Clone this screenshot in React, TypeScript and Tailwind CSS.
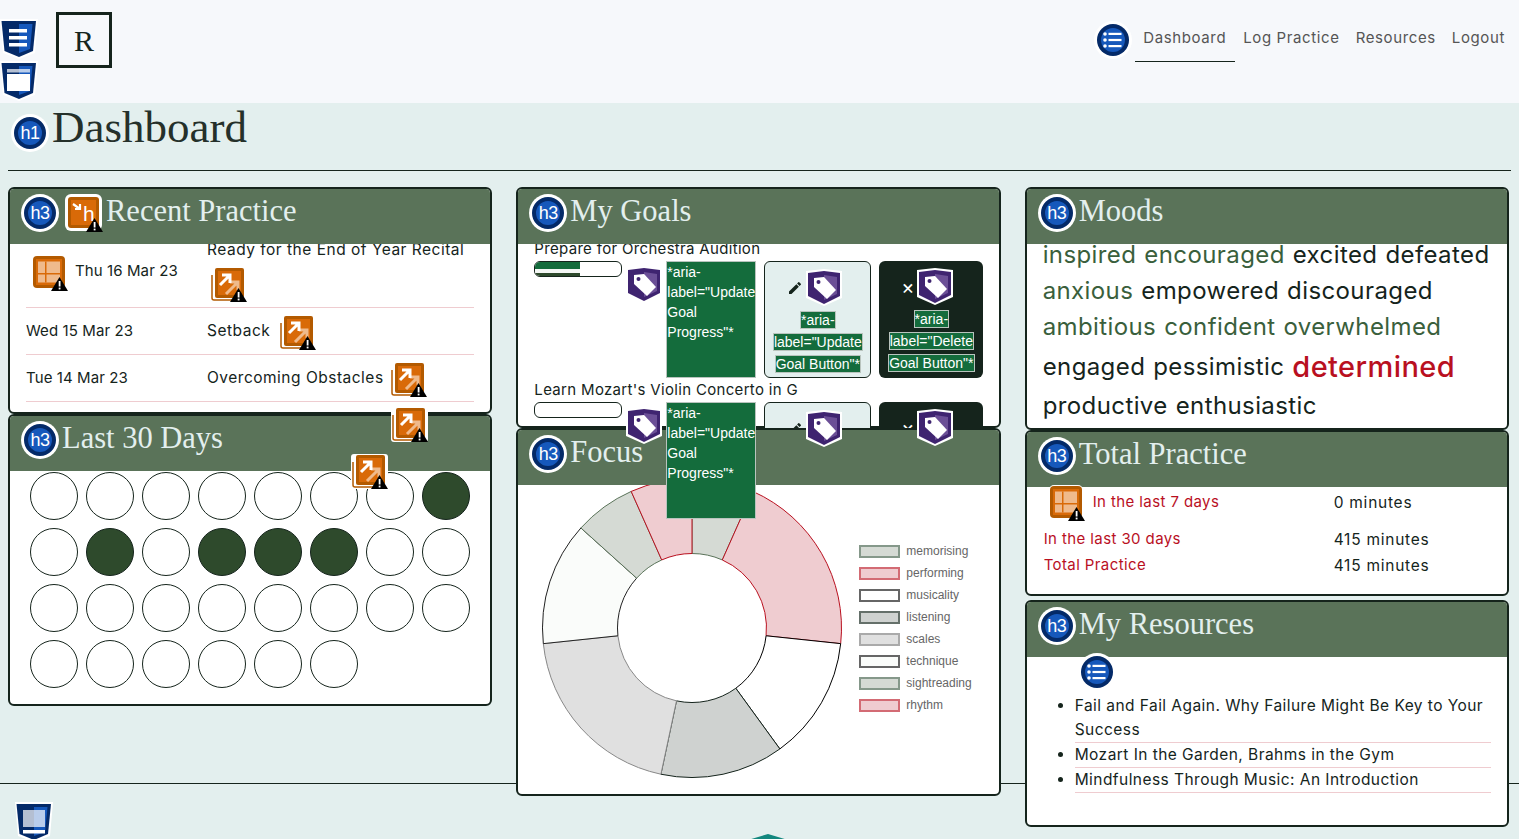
const SANS = "font-['Inter','Liberation_Sans',sans-serif]";

function Warn({ x, y }: { x: number; y: number }) {
  return (
    <g transform={`translate(${x} ${y})`}>
      <polygon points="8.5,0 17,14 0,14" fill="#000" />
      <rect x="7.7" y="4" width="1.8" height="5.5" fill="#fff" />
      <rect x="7.7" y="10.6" width="1.8" height="1.8" fill="#fff" />
    </g>
  );
}

function HeadBadge({ label }: { label: string }) {
  return (
    <span className="flex h-[38px] w-[38px] shrink-0 items-center justify-center rounded-full bg-white">
      <span className="flex h-[32px] w-[32px] items-center justify-center rounded-full border-[4px] border-[#042a68] bg-[#1658bb] font-['Liberation_Sans',sans-serif] text-[18px] leading-none tracking-[-0.5px] text-white">
        {label}
      </span>
    </span>
  );
}

function ListBadge() {
  return (
    <svg width="38" height="38" viewBox="0 0 38 38" className="shrink-0">
      <circle cx="19" cy="19" r="19" fill="#fff" />
      <circle cx="19" cy="19" r="16" fill="#042a68" />
      <circle cx="19" cy="19" r="12" fill="#1658bb" />
      <g fill="#fff">
        <circle cx="11" cy="13" r="1.8" />
        <circle cx="11" cy="19" r="1.8" />
        <circle cx="11" cy="25" r="1.8" />
        <rect x="14.5" y="11.8" width="13" height="2.2" />
        <rect x="14.5" y="17.9" width="13" height="2.2" />
        <rect x="14.5" y="24" width="13" height="2.2" />
      </g>
    </svg>
  );
}

function Shield({ kind }: { kind: "nav" | "header" | "footer" }) {
  return (
    <svg width="38" height="40" viewBox="0 0 38 40" className="block shrink-0">
      <polygon points="0,0 38,0 35,34 19,40 3,34" fill="#fff" />
      <polygon points="1.5,2 36,2 33,32 19,38 4.5,32" fill="#042a68" />
      <polygon points="19,5 32.5,5 30,30 19,34" fill="#1658bb" />
      {kind === "nav" && (
        <g fill="#fff">
          <rect x="9" y="10" width="18" height="3.5" />
          <rect x="9" y="17" width="18" height="3.5" />
          <rect x="9" y="24" width="18" height="3.5" />
        </g>
      )}
      {kind === "header" && (
        <g>
          <rect x="7" y="8" width="23" height="3.5" fill="#fff" opacity="0.7" />
          <rect x="7" y="13" width="23" height="17" fill="#fff" />
        </g>
      )}
      {kind === "footer" && (
        <g>
          <rect x="8" y="8" width="22" height="17" fill="#fff" opacity="0.7" />
          <rect x="8" y="28" width="22" height="3.5" fill="#fff" />
        </g>
      )}
    </svg>
  );
}

function TagIcon({ outlined }: { outlined?: boolean }) {
  return (
    <svg width="36" height="37" viewBox="0 0 36 37" className="block shrink-0">
      {outlined && <polygon points="0,2 18,0 36,2 36,29 18,37 0,29" fill="#fff" />}
      <polygon points="2,4 18,2 34,4 34,27 18,35 2,27" fill="#3f2470" />
      <polygon points="18,6 31,8 31,25 18,31" fill="#6b4f96" />
      <path d="M8 9 L18 8 L30 21 L21 30 L8 18 Z" fill="#fff" />
      <circle cx="12.5" cy="13" r="2" fill="#3f2470" />
    </svg>
  );
}

function TableIcon({ outlined }: { outlined?: boolean }) {
  return (
    <svg width="36" height="36" viewBox="0 0 36 36" className="block shrink-0">
      {outlined && <rect x="0" y="0" width="34" height="34" rx="5" fill="#fff" />}
      <rect x="1" y="1" width="32" height="32" rx="4" fill="#b35a00" />
      <rect x="4" y="4" width="26" height="26" fill="#d96a08" />
      <rect x="6" y="6.5" width="22" height="21" fill="#efba8c" />
      <rect x="6" y="18" width="22" height="1.5" fill="#d96a08" />
      <rect x="13" y="6.5" width="1.5" height="21" fill="#d96a08" />
      <Warn x={19} y={22} />
    </svg>
  );
}

function LinkIcon({ outlined }: { outlined?: boolean }) {
  return (
    <svg width="38" height="36" viewBox="0 0 38 36" className="block shrink-0">
      {outlined && <rect x="0" y="0" width="37" height="35" rx="3" fill="#fff" />}
      <path d="M2 8 V31 a2 2 0 0 0 2 2 H28" fill="none" stroke="#b35a00" strokeWidth="1.5" />
      <rect x="5" y="1" width="29" height="30" rx="2" fill="#b35a00" />
      <rect x="8" y="4" width="23" height="24" fill="#d96a08" />
      <path d="M16 27 L27 16 M20 15 h8 v8" fill="none" stroke="#efba8c" strokeWidth="3" />
      <path d="M10 18 L19 9 M12 8 h8 v8" fill="none" stroke="#fff" strokeWidth="3" />
      <Warn x={20} y={21} />
    </svg>
  );
}

function SkipIcon() {
  return (
    <svg width="38" height="38" viewBox="0 0 38 38" className="block shrink-0">
      <rect x="0" y="0" width="37" height="37" rx="6" fill="#fff" />
      <rect x="3" y="3" width="31" height="31" rx="3" fill="#b35a00" />
      <rect x="6" y="6" width="25" height="25" fill="#d96a08" />
      <path d="M8 10 L15 15 M15 10 v5 h-5" fill="none" stroke="#fff" strokeWidth="2.2" />
      <text x="18" y="27" fill="#fff" fontSize="21" fontFamily="Liberation Sans">h</text>
      <Warn x={21} y={24} />
    </svg>
  );
}

function Card({ title, badge, heightClass, extraClass, children }: {
  title: string;
  badge?: React.ReactNode;
  heightClass: string;
  extraClass?: string;
  children: React.ReactNode;
}) {
  return (
    <section className={`rounded-md border-2 border-[#15241c] bg-white ${heightClass} ${extraClass ?? ""}`}>
      <header className="relative z-[5] flex h-[55px] items-start rounded-t-[4px] bg-[#5a7359] pl-[11px] pt-[5px]">
        <HeadBadge label="h3" />
        {badge && <span className="ml-[6px]">{badge}</span>}
        <h3 className="-mt-[1px] ml-[3px] font-['Liberation_Serif',serif] text-[30.5px] leading-[36px] text-[#e3efee]">
          {title}
        </h3>
      </header>
      {children}
    </section>
  );
}

function AriaText({ children }: { children: string }) {
  return (
    <span className="bg-[#146c3c] font-['Liberation_Sans',sans-serif] text-[14px] text-white outline outline-1 outline-[#b9c4be] box-decoration-clone">
      {children}
    </span>
  );
}

function Goal({ name, fill, secondRow }: { name: string; fill?: boolean; secondRow?: boolean }) {
  return (
    <div className="h-[141px]">
      <p className="h-[20px] text-[15px] leading-[20px] tracking-[0.32px] text-[#15241c]">{name}</p>
      <div className="mt-[2px] flex items-start">
        <div className="h-[16px] w-[88px] shrink-0 overflow-hidden rounded-md border border-[#15241c]">
          {fill && (
            <div className="flex h-full w-[45px] flex-col">
              <div className="h-[7px] bg-[#146c3c]" />
              <div className="h-[4px] bg-[#f4f7f4]" />
              <div className="h-[3px] bg-[#2e4a2c]" />
            </div>
          )}
        </div>
        <div className="relative z-20 ml-[4px] mt-[5px] w-[34px] shrink-0">
          <TagIcon outlined={secondRow} />
        </div>
        <div className="relative z-20 ml-[6px] h-[117px] w-[90px] shrink-0 border border-[#b9c4be] bg-[#146c3c] font-['Liberation_Sans',sans-serif] text-[14px] leading-[20px] text-white">
          *aria-label="Update Goal Progress"*
        </div>
        <div className="ml-[8px] flex h-[117px] w-[107px] shrink-0 flex-col items-center rounded-md border border-[#15241c] bg-[#e3efee] px-1 pt-[7px] text-center">
          <div className="mr-[6px] flex items-center gap-[3px]">
            <svg width="16" height="16" viewBox="0 0 24 24" fill="#15241c">
              <path d="M3 17.25V21h3.75L17.8 9.94l-3.75-3.75L3 17.25zM20.7 7.04a1 1 0 0 0 0-1.41l-2.34-2.34a1 1 0 0 0-1.41 0l-1.83 1.83 3.75 3.75 1.83-1.83z" />
            </svg>
            <span className="relative z-20"><TagIcon outlined /></span>
          </div>
          <p className="mt-[3px] leading-[21px]"><AriaText>*aria-label="Update Goal Button"*</AriaText></p>
        </div>
        <div className="ml-[8px] flex h-[117px] w-[104px] shrink-0 flex-col items-center rounded-md bg-[#15241c] px-1 pt-[7px] text-center">
          <div className="mr-[8px] flex items-center gap-[3px] text-white">
            <span className="text-[20px] leading-none">×</span>
            <span className="relative z-20"><TagIcon outlined /></span>
          </div>
          <p className="mt-[3px] leading-[21px]"><AriaText>*aria-label="Delete Goal Button"*</AriaText></p>
        </div>
      </div>
    </div>
  );
}

const segments = [
  { name: "memorising", from: 0, to: 24, fill: "#d5dad4", stroke: "#5a7359", swatch: "border-[#85988a] bg-[#d5dad4]" },
  { name: "performing", from: 24, to: 96, fill: "#efccd0", stroke: "#b9101f", swatch: "border-[#d36b74] bg-[#efccd0]" },
  { name: "musicality", from: 96, to: 144, fill: "#ffffff", stroke: "#000000", swatch: "border-[#666] bg-white" },
  { name: "listening", from: 144, to: 192, fill: "#cfd2d0", stroke: "#15241c", swatch: "border-[#65706a] bg-[#cfd2d0]" },
  { name: "scales", from: 192, to: 264, fill: "#e0e0e0", stroke: "#888888", swatch: "border-[#aaa] bg-[#e0e0e0]" },
  { name: "technique", from: 264, to: 312, fill: "#fafcfa", stroke: "#222222", swatch: "border-[#666] bg-[#fafcfa]" },
  { name: "sightreading", from: 312, to: 336, fill: "#d5dad4", stroke: "#5a7359", swatch: "border-[#85988a] bg-[#d5dad4]" },
  { name: "rhythm", from: 336, to: 360, fill: "#efccd0", stroke: "#b9101f", swatch: "border-[#d36b74] bg-[#efccd0]" },
];

function arcPath(from: number, to: number) {
  const cx = 174, cy = 143, R = 149.5, r = 74.5;
  const pt = (rad: number, a: number) => {
    const t = (a * Math.PI) / 180;
    return `${(cx + rad * Math.sin(t)).toFixed(2)} ${(cy - rad * Math.cos(t)).toFixed(2)}`;
  };
  const large = to - from > 180 ? 1 : 0;
  return `M${pt(R, from)} A${R} ${R} 0 ${large} 1 ${pt(R, to)} L${pt(r, to)} A${r} ${r} 0 ${large} 0 ${pt(r, from)} Z`;
}

const filledDays = [7, 9, 11, 12, 13];

const moods = [
  { h: "h-[36px]", words: [["inspired", 0], ["encouraged", 0], ["excited", 1], ["defeated", 1]] },
  { h: "h-[36px]", words: [["anxious", 0], ["empowered", 1], ["discouraged", 1]] },
  { h: "h-[36px]", words: [["ambitious", 0], ["confident", 0], ["overwhelmed", 0]] },
  { h: "h-[43px]", words: [["engaged", 1], ["pessimistic", 1], ["determined", 2]] },
  { h: "h-[36px]", words: [["productive", 1], ["enthusiastic", 1]] },
] as const;

const moodColor = ["text-[#3a5f3c]", "text-[#15241c]", "text-[#b9101f] text-[29px] font-medium"];

export default function App() {
  return (
    <div className={`h-[839px] overflow-hidden bg-[#e3efee] ${SANS}`}>
      {/* Top bar */}
      <div className="flex h-[103px] items-start bg-[#f6f8fb]">
        <div className="flex flex-col gap-[2px] pt-[19px]">
          <Shield kind="nav" />
          <Shield kind="header" />
        </div>
        <div className="ml-[18px] mt-[12px] flex h-[56px] w-[56px] items-center justify-center border-[3px] border-[#15241c] font-['Liberation_Serif',serif] text-[30px] text-[#15241c]">
          R
        </div>
        <nav className="ml-auto mr-[6px] mt-[18px] flex items-start text-[15px] tracking-[0.62px] text-[#555]">
          <span className="mr-[3px] mt-[3px]"><ListBadge /></span>
          <a className="flex h-[44px] w-[100px] items-center border-b border-[#15241c] px-2 pb-[3px]">Dashboard</a>
          <a className="flex h-[44px] items-center px-2 pb-[3px]">Log Practice</a>
          <a className="flex h-[44px] items-center px-2 pb-[3px]">Resources</a>
          <a className="flex h-[44px] items-center px-2 pb-[3px]">Logout</a>
        </nav>
      </div>

      {/* Page title */}
      <div className="mx-2 h-[68px] border-b border-[#15241c]">
        <div className="flex items-start pl-[3px]">
          <span className="mt-[11px]"><HeadBadge label="h1" /></span>
          <h1 className="ml-[3px] font-['Liberation_Serif',serif] text-[45px] leading-[48px] text-[#25302a]">Dashboard</h1>
        </div>
      </div>

      {/* Dashboard columns */}
      <main className="grid h-[612px] grid-cols-3 items-start gap-6 pb-0 pl-2 pr-[10px] pt-[16px]">
        <div className="flex flex-col">
          <Card title="Recent Practice" badge={<SkipIcon />} heightClass="h-[227px]" extraClass="relative">
            <div className="-mt-[6px] px-4 text-[15px] tracking-[0.1px] text-[#15241c]">
              <div className="grid h-[70px] grid-cols-[181px_1fr] border-b border-[#efccd0]">
                <div className="flex items-start pl-[6px] pt-[17px]">
                  <TableIcon />
                  <span className="ml-[7px] mt-[5px]">Thu 16 Mar 23</span>
                </div>
                <div>
                  <p className="text-[15.5px] leading-[24px] tracking-[0.5px]">Ready for the End of Year Recital</p>
                  <span className="ml-[3px] mt-[5px] block w-fit"><LinkIcon /></span>
                </div>
              </div>
              <div className="grid h-[47px] grid-cols-[181px_1fr] items-center border-b border-[#efccd0]">
                <span>Wed 15 Mar 23</span>
                <div className="flex items-center gap-[9px]">
                  <span className="text-[15.5px] tracking-[0.5px]">Setback</span>
                  <span className="mt-[4px]"><LinkIcon /></span>
                </div>
              </div>
              <div className="grid h-[47px] grid-cols-[181px_1fr] items-center border-b border-[#efccd0]">
                <span>Tue 14 Mar 23</span>
                <div className="flex items-center gap-[6px]">
                  <span className="text-[15.5px] tracking-[0.5px]">Overcoming Obstacles</span>
                  <span className="mt-[4px]"><LinkIcon /></span>
                </div>
              </div>
            </div>
            <span className="absolute left-[381px] top-[218px] z-20"><LinkIcon outlined /></span>
            <span className="absolute left-[341px] top-[265px] z-20"><LinkIcon outlined /></span>
          </Card>
          <Card title="Last 30 Days" heightClass="h-[292px]" extraClass="relative z-10">
            <div className="grid grid-cols-[repeat(8,48px)] gap-2 pl-[20px] pt-[1px]">
              {Array.from({ length: 30 }, (_, i) => (
                <div
                  key={i}
                  className={
                    filledDays.includes(i)
                      ? "h-[48px] w-[48px] rounded-full border border-[#15241c] bg-[#2e4a2c]"
                      : "h-[48px] w-[48px] rounded-full border border-[#15241c] bg-white"
                  }
                />
              ))}
            </div>
          </Card>
        </div>

        <div className="flex flex-col">
          <Card title="My Goals" heightClass="h-[241px]">
            <div className="-mt-[5px] pl-4">
              <Goal name="Prepare for Orchestra Audition" fill />
              <Goal name="Learn Mozart's Violin Concerto in G" secondRow />
            </div>
          </Card>
          <Card title="Focus" heightClass="h-[368px]" extraClass="relative z-10">
            <div className="flex items-start">
              <svg width="334" height="300" viewBox="0 0 334 300" className="shrink-0">
                {segments.map((s) => (
                  <path key={s.name} d={arcPath(s.from, s.to)} fill={s.fill} stroke={s.stroke} strokeWidth="1" />
                ))}
              </svg>
              <ul className="ml-[7px] mt-[55px] font-['Liberation_Sans',sans-serif] text-[12px] text-[#666]">
                {segments.map((s) => (
                  <li key={s.name} className="flex h-[22px] items-center gap-[6px]">
                    <span className={`h-[13px] w-[41px] border-2 ${s.swatch}`} />
                    {s.name}
                  </li>
                ))}
              </ul>
            </div>
          </Card>
        </div>

        <div className="flex flex-col">
          <Card title="Moods" heightClass="h-[243px]">
            <div className="-mt-[7px] pl-4 text-[24px] tracking-[0.4px]">
              {moods.map((line, i) => (
                <div key={i} className={`flex items-center gap-[8px] ${line.h}`}>
                  {line.words.map(([w, c]) => (
                    <span key={w} className={moodColor[c]}>{w}</span>
                  ))}
                </div>
              ))}
            </div>
          </Card>
          <Card title="Total Practice" heightClass="h-[166px]" extraClass="relative z-10">
            <div className="relative z-[6] -mt-[2px] grid grid-cols-[290px_1fr] pl-[17px] text-[15px] tracking-[0.4px]">
              <div className="flex h-[43px] items-start pl-[5px] text-[#b9101f]">
                <TableIcon outlined />
                <span className="ml-[8px] mt-[6px]">In the last 7 days</span>
              </div>
              <span className="mt-[6px] text-[15.5px] tracking-[0.75px] text-[#15241c]">0 minutes</span>
              <span className="h-[26px] text-[#b9101f]">In the last 30 days</span>
              <span className="text-[15.5px] tracking-[0.75px] text-[#15241c]">415 minutes</span>
              <span className="text-[#b9101f]">Total Practice</span>
              <span className="text-[15.5px] tracking-[0.75px] text-[#15241c]">415 minutes</span>
            </div>
          </Card>
          <Card title="My Resources" heightClass="h-[227px]" extraClass="relative z-10 mt-[4px]">
            <div className="relative z-[6] -mt-[4px] pl-[51px]">
              <ListBadge />
            </div>
            <ul className="ml-[48px] mr-4 mt-[3px] list-disc text-[15.5px] leading-[24px] tracking-[0.45px] text-[#15241c]">
              <li className="border-b border-[#efccd0]">Fail and Fail Again. Why Failure Might Be Key to Your Success</li>
              <li className="border-b border-[#efccd0]">Mozart In the Garden, Brahms in the Gym</li>
              <li className="border-b border-[#efccd0]">Mindfulness Through Music: An Introduction</li>
            </ul>
          </Card>
        </div>
      </main>

      {/* Footer */}
      <footer className="relative border-t border-[#15241c] pl-[15px] pt-[18px]">
        <Shield kind="footer" />
        <svg width="40" height="6" viewBox="0 0 40 6" className="absolute left-[748px] top-[50px]">
          <polygon points="0,6 20,0 40,6" fill="#12877e" />
        </svg>
      </footer>
    </div>
  );
}
